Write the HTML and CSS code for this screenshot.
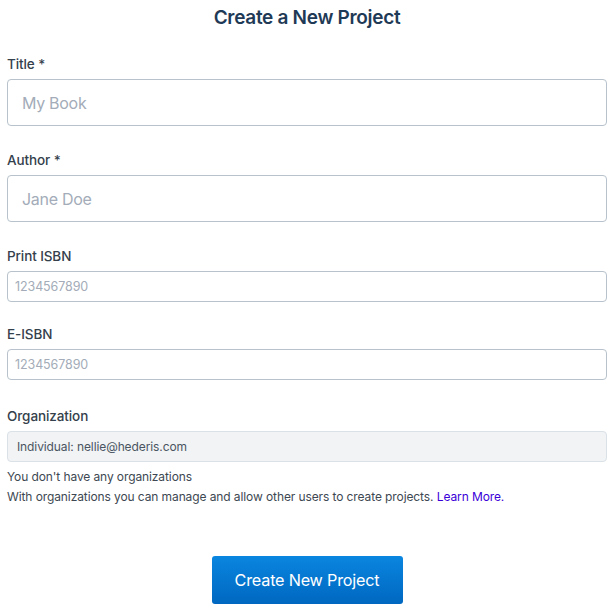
FILE: index.html
```html
<!DOCTYPE html>
<html>
<head>
<meta charset="utf-8">
<link rel="stylesheet" href="styles.css">
</head>
<body>
<div class="page">
  <h1 class="heading">Create a New Project</h1>
  <form class="form">
    <div class="field">
      <label class="label">Title *</label>
      <input class="input input-lg" type="text" placeholder="My Book">
    </div>
    <div class="field">
      <label class="label">Author *</label>
      <input class="input input-lg" type="text" placeholder="Jane Doe">
    </div>
    <div class="field field-tight">
      <label class="label">Print ISBN</label>
      <input class="input input-sm" type="text" placeholder="1234567890">
    </div>
    <div class="field">
      <label class="label">E-ISBN</label>
      <input class="input input-sm" type="text" placeholder="1234567890">
    </div>
    <div class="field field-last">
      <label class="label">Organization</label>
      <div class="select">Individual: nellie@hederis.com</div>
      <p class="note first">You don't have any organizations</p>
      <p class="note">With organizations you can manage and allow other users to create projects. <a class="link" href="#">Learn More.</a></p>
    </div>
    <div class="actions">
      <button class="button" type="button">Create New Project</button>
    </div>
  </form>
</div>
</body>
</html>
```

FILE: styles.css
```css
* { box-sizing: border-box; }
html, body { margin: 0; padding: 0; background: #fff; }
body {
  font-family: Inter, "Liberation Sans", sans-serif;
  color: #3d4852;
}
.page { padding: 0 6px 0 7px; }
.heading {
  margin: 0;
  height: 36px;
  line-height: 36px;
  text-align: center;
  font-size: 19px;
  font-weight: 600;
  color: #1f3a56;
  letter-spacing: -0.3px;
}
.form { display: flex; flex-direction: column; padding-top: 18px; }
.field { display: flex; flex-direction: column; margin-bottom: 24px; }
.field-tight { margin-bottom: 22px; }
.field-last { margin-bottom: 0; padding-top: 2px; }
.label {
  display: block;
  height: 20px;
  line-height: 20px;
  font-size: 13.5px;
  font-weight: 500;
  color: #34404c;
  margin-bottom: 5px;
  letter-spacing: -0.1px;
}
.input {
  width: 100%;
  border: 1px solid #b8c2cc;
  border-radius: 4px;
  background: #fff;
  font-family: Inter, "Liberation Sans", sans-serif;
  outline: none;
  margin: 0;
}
.input::placeholder { color: #a3acb8; }
.input-lg { height: 47px; padding: 0 14px; font-size: 16px; letter-spacing: -0.3px; }
.input-sm { height: 31px; padding: 0 7px; font-size: 12.5px; letter-spacing: -0.1px; }
.select {
  height: 31px;
  line-height: 29px;
  border: 1px solid #dae1e7;
  border-radius: 4px;
  background: #f1f3f5;
  padding: 0 9px;
  font-size: 12px;
  color: #4a5561;
  letter-spacing: -0.1px;
}
.note {
  margin: 0;
  height: 20px;
  line-height: 20px;
  font-size: 12px;
  color: #3d4852;
  letter-spacing: -0.1px;
}
.note.first { margin-top: 5px; }
.link { color: #3b00d8; text-decoration: none; }
.actions { display: flex; justify-content: center; padding-top: 49px; }
.button {
  width: 191px;
  height: 48px;
  border: none;
  border-radius: 3px;
  background: linear-gradient(#0a86e0, #0067c0);
  color: #fff;
  font-family: Inter, "Liberation Sans", sans-serif;
  font-size: 16.2px;
  letter-spacing: -0.2px;
  padding: 0;
}
```
